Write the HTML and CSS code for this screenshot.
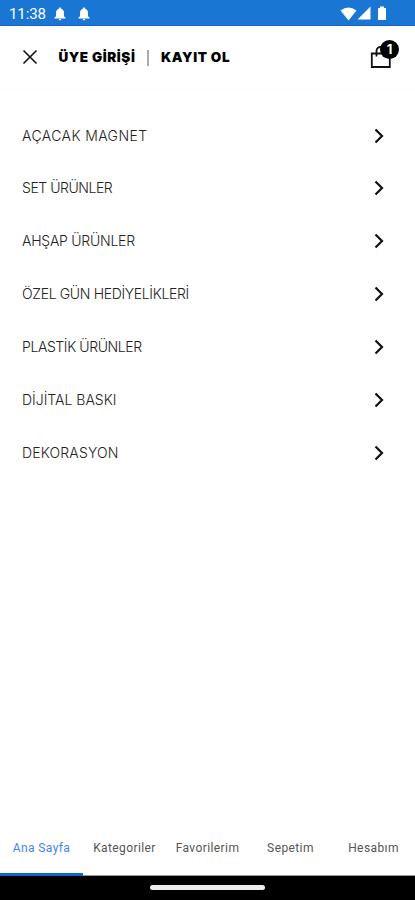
FILE: index.html
```html
<!DOCTYPE html>
<html lang="tr">
<head>
<meta charset="utf-8">
<title>Menü</title>
<link rel="stylesheet" href="styles.css">
</head>
<body>
<div class="status">
  <span class="time">11:38</span>
  <svg class="bell" viewBox="0 0 12 14"><path d="M6 .5c.8 0 1.2.5 1.2 1.3C9 2.4 10 4 10 6v3.2l1.6 1.6v.7H.4v-.7L2 9.200V6c0-2 1-3.600 2.800-4.200C4.800 1 5.200.5 6 .5zM4.700 12h2.600c0 .9-.5 1.400-1.300 1.400S4.700 12.900 4.700 12z"/></svg>
  <svg class="bell" viewBox="0 0 12 14"><path d="M6 .5c.8 0 1.2.5 1.2 1.3C9 2.4 10 4 10 6v3.2l1.6 1.6v.7H.4v-.7L2 9.200V6c0-2 1-3.600 2.800-4.200C4.800 1 5.200.5 6 .5zM4.700 12h2.600c0 .9-.5 1.400-1.300 1.400S4.700 12.900 4.700 12z"/></svg>
  <svg class="signals" viewBox="0 0 50 16"><path d="M-.5 4.500Q7.500-1.500 15.500 4.500L7.500 14.500zM29.500 .5v13H16.500zM37 2h2V.5h4V2h2V14h-8z"/></svg>
</div>
<header class="header">
  <svg class="close" viewBox="0 0 16 16"><path d="M1.500 1.500l13 13M14.500 1.500l-13 13"/></svg>
  <a class="login">ÜYE GİRİŞİ</a>
  <span class="divider"></span>
  <a class="signup">KAYIT OL</a>
  <div class="cart">
    <svg viewBox="0 0 22 24"><path d="M1.800 8.500h18v13.500h-18zM6.500 11.500V6a4 4 0 0 1 8 0v5.500"/></svg>
    <span class="badge">1</span>
  </div>
</header>
<ul class="menu">
  <li><span class="magnet">AÇACAK MAGNET</span><svg viewBox="0 0 10 16"><path d="M1.500 1.500L8 8l-6.500 6.500"/></svg></li>
  <li><span class="set">SET ÜRÜNLER</span><svg viewBox="0 0 10 16"><path d="M1.500 1.500L8 8l-6.500 6.500"/></svg></li>
  <li><span class="wood">AHŞAP ÜRÜNLER</span><svg viewBox="0 0 10 16"><path d="M1.500 1.500L8 8l-6.500 6.500"/></svg></li>
  <li><span class="gifts">ÖZEL GÜN HEDİYELİKLERİ</span><svg viewBox="0 0 10 16"><path d="M1.500 1.500L8 8l-6.500 6.500"/></svg></li>
  <li><span class="plastic">PLASTİK ÜRÜNLER</span><svg viewBox="0 0 10 16"><path d="M1.500 1.500L8 8l-6.500 6.500"/></svg></li>
  <li><span class="print">DİJİTAL BASKI</span><svg viewBox="0 0 10 16"><path d="M1.500 1.500L8 8l-6.500 6.500"/></svg></li>
  <li><span class="decor">DEKORASYON</span><svg viewBox="0 0 10 16"><path d="M1.500 1.500L8 8l-6.500 6.500"/></svg></li>
</ul>
<nav class="tabs">
  <a class="active">Ana Sayfa</a><a>Kategoriler</a><a>Favorilerim</a><a>Sepetim</a><a>Hesabım</a>
</nav>
<div class="system"><span></span></div>
</body>
</html>
```

FILE: styles.css
```css
* { box-sizing: border-box; }
body { margin: 0; height: 900px; display: flex; flex-direction: column; background: #fff; color: #111; overflow: hidden; font-family: Inter, sans-serif; }
svg { display: block; flex: none; }
.status { height: 26px; flex: none; background: #1976d2; border-bottom: 1px solid #1565c4; display: flex; align-items: center; padding: 2px 20px 0 9px; color: #fff; }
.time { font: 400 15px/22px Roboto, sans-serif; width: 45px; letter-spacing: -.1px; }
.bell { width: 12px; height: 14px; fill: #fff; margin-right: 12px; }
.signals { width: 50px; height: 16px; fill: #fff; margin-left: auto; margin-right: 4px; overflow: visible; }
.header { height: 64px; flex: none; display: flex; align-items: center; padding: 0 16px 1px 21.500px; border-bottom: 1px solid #fcfcfc; }
.close { width: 16px; height: 16px; fill: none; stroke: #111; stroke-width: 1.6; margin-right: 21px; }
.login, .signup { font-size: 13.500px; font-weight: 900; line-height: 20px; white-space: nowrap; color: #000; }
.login { width: 89.500px; letter-spacing: .58px; }
.signup { letter-spacing: .6px; }
.divider { width: 2px; height: 16px; background: #aaa; margin-right: 12px; margin-left: -1px; margin-top: 1px; }
.cart { position: relative; margin-left: auto; width: 29px; height: 32px; padding-top: 4px; }
.cart svg { width: 22px; height: 24px; fill: none; stroke: #111; stroke-width: 1.800; }
.badge { position: absolute; right: 0; top: -1px; width: 19px; height: 19px; border-radius: 50%; background: #000; color: #fff; font: 700 13px/19px Inter, sans-serif; text-align: center; }
.menu { list-style: none; margin: 0; padding: 18.600px 31px 0 22px; flex: 1; }
.menu li { height: 52.900px; display: flex; align-items: center; justify-content: space-between; font-size: 14px; font-weight: 300; color: #222; white-space: nowrap; }
.menu svg { width: 10px; height: 16px; fill: none; stroke: #111; stroke-width: 2.200; margin-top: 1px; }
.magnet { letter-spacing: .4px; }
.set { letter-spacing: -.45px; }
.wood { letter-spacing: -.25px; }
.gifts { letter-spacing: -.34px; }
.plastic { letter-spacing: -.4px; }
.decor { letter-spacing: .17px; }
.tabs { height: 56px; flex: none; display: grid; grid-template-columns: repeat(5, 1fr); border-bottom: 1px solid #999; font: 400 12px/56px Roboto, sans-serif; letter-spacing: .4px; color: #555; text-align: center; }
.tabs a { height: 56px; }
.tabs .active { color: #4285f4; border-bottom: 3px solid #1565c8; }
.system { height: 24px; flex: none; background: #000; display: flex; justify-content: center; padding-top: 9px; }
.system span { width: 115px; height: 5px; border-radius: 3px; background: #eee; }
```
